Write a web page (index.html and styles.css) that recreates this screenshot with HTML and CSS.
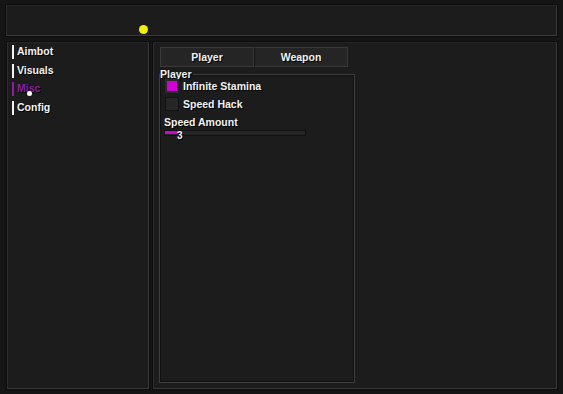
FILE: index.html
```html
<!DOCTYPE html>
<html lang="en">
<head>
  <meta charset="UTF-8"/>
  <title>Menu</title>
  <link rel="stylesheet" href="styles.css">
</head>
<body>

  <!-- Title bar -->
  <div class="topbar">
    <span class="status-dot"></span>
  </div>

  <div class="main">
    <!-- Sidebar -->
    <nav class="sidebar">
      <a class="nav-item" href="#">Aimbot</a>
      <a class="nav-item" href="#">Visuals</a>
      <a class="nav-item active" href="#">Misc</a>
      <a class="nav-item" href="#">Config</a>
      <span class="cursor"></span>
    </nav>

    <!-- Content -->
    <section class="content">
      <div class="tabs">
        <button class="tab">Player</button>
        <button class="tab">Weapon</button>
      </div>

      <fieldset class="group">
        <legend>Player</legend>
        <label class="check-row">
          <span class="checkbox checked"></span>
          Infinite Stamina
        </label>
        <label class="check-row">
          <span class="checkbox"></span>
          Speed Hack
        </label>
        <div class="slider-label">Speed Amount</div>
        <div class="slider">
          <div class="slider-fill" style="width: 13px;"></div>
          <span class="slider-value">3</span>
        </div>
      </fieldset>
    </section>
  </div>

</body>
</html>
```

FILE: styles.css
```css
* {
  margin: 0;
  padding: 0;
  box-sizing: border-box;
  font-family: 'Liberation Sans', Arial, sans-serif;
}

body {
  background: #151515;
  color: #f2f2f2;
  width: 563px;
  height: 394px;
  padding: 5px 6px 5px 6px;
  display: flex;
  flex-direction: column;
  gap: 6px;
  overflow: hidden;
}

.topbar {
  height: 31px;
  background: #1c1c1c;
  border: 1px solid #3a3a3a;
  border-top-color: #262626;
  border-left-color: #2e2e2e;
  box-shadow: 0 0 0 1px #0c0c0c;
  padding: 19px 0 0 132px;
}

.status-dot {
  display: block;
  width: 9px;
  height: 9px;
  border-radius: 50%;
  background: #f5ee0a;
}

.main {
  flex: 1;
  display: flex;
  gap: 4px;
}

.sidebar {
  position: relative;
  width: 142px;
  margin-left: 1px;
  background: #1c1c1c;
  border: 1px solid #3a3a3a;
  border-top-color: #262626;
  border-left-color: #2e2e2e;
  box-shadow: 0 0 0 1px #0c0c0c;
  padding: 2px 4px;
  display: flex;
  flex-direction: column;
  gap: 4.7px;
}

.nav-item {
  display: block;
  height: 14px;
  line-height: 13px;
  padding-left: 3px;
  border-left: 2px solid #f2f2f2;
  color: #f2f2f2;
  text-decoration: none;
  font-size: 10.5px;
  font-weight: bold;
  text-shadow: 1px 1px 0 #000;
}

.nav-item.active {
  color: #8e1ea0;
  border-left-color: #8e1ea0;
}

.cursor {
  position: absolute;
  left: 19px;
  top: 48px;
  width: 5px;
  height: 5px;
  border-radius: 50%;
  background: #ffffff;
}

.content {
  flex: 1;
  background: #1c1c1c;
  border: 1px solid #3a3a3a;
  border-top-color: #262626;
  border-left-color: #2e2e2e;
  box-shadow: 0 0 0 1px #0c0c0c;
  padding: 4px 6px 5px 5px;
  display: flex;
  flex-direction: column;
}

.tabs {
  display: flex;
  width: 188px;
  margin-left: 1px;
}

.tab {
  width: 94px;
  height: 20px;
  background: #252525;
  border: 1px solid #3a3a3a;
  color: #f2f2f2;
  font-size: 10.5px;
  font-weight: bold;
  line-height: 17px;
  text-shadow: 1px 1px 0 #000;
}

.tab + .tab {
  border-left: 1px solid #121212;
}

.group {
  flex: 1;
  width: 196px;
  margin-top: 2px;
  border: 1px solid #3e3e3e;
  box-shadow: inset 0 0 0 1px #111;
  padding: 0 5px;
}

.group legend {
  margin-left: -5px;
  font-size: 10.5px;
  font-weight: bold;
  line-height: 10px;
  padding-right: 1px;
  text-shadow: 1px 1px 0 #000;
}

.check-row {
  display: flex;
  align-items: center;
  gap: 4px;
  height: 14px;
  margin-bottom: 4px;
  font-size: 10.5px;
  font-weight: bold;
  text-shadow: 1px 1px 0 #000;
}

.checkbox {
  width: 14px;
  height: 14px;
  background: #262626;
  border: 1px solid #121212;
}

.checkbox.checked {
  background: #d200d6;
  border: 2px solid #2a2a2a;
}

.slider-label {
  margin-top: 5px;
  margin-left: -1px;
  font-size: 10.5px;
  font-weight: bold;
  line-height: 13px;
  text-shadow: 1px 1px 0 #000;
}

.slider {
  position: relative;
  width: 142px;
  height: 6px;
  margin-top: 1px;
  margin-left: -1px;
  background: #262626;
  border: 1px solid #111;
}

.slider-fill {
  height: 3px;
  background: #d200d6;
}

.slider-value {
  position: absolute;
  left: 12px;
  top: 0px;
  font-size: 10px;
  font-weight: bold;
  line-height: 10px;
  text-shadow: 1px 1px 0 #000;
}
```
